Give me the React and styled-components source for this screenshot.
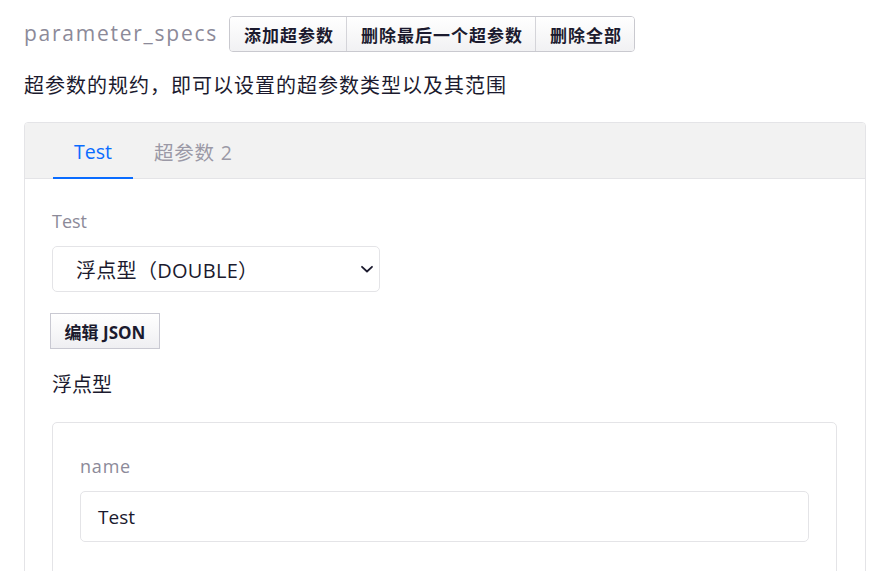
import styled, { createGlobalStyle } from 'styled-components';

const GlobalStyle = createGlobalStyle`
    body {
        margin: 0;
        background: #fff;
        font-family: "Open Sans", "Noto Sans CJK SC", sans-serif;
        color: #1b1a2e;
    }
`;

const tabs = ['Test', '超参数 2'];

const App = () => {
    return (
        <Page>
            <GlobalStyle />
            <Header>
                <FieldName>parameter_specs</FieldName>
                <ButtonGroup>
                    <GroupButton>添加超参数</GroupButton>
                    <GroupButton>删除最后一个超参数</GroupButton>
                    <GroupButton>删除全部</GroupButton>
                </ButtonGroup>
            </Header>
            <Description>超参数的规约，即可以设置的超参数类型以及其范围</Description>

            <Card>
                <TabBar>
                    {tabs.map((tab, i) => (
                        <Tab key={tab} $active={i === 0}>{tab}</Tab>
                    ))}
                </TabBar>
                <CardBody>
                    <Label>Test</Label>
                    <SelectBox>
                        <span>浮点型（DOUBLE）</span>
                        <svg width="14" height="14" viewBox="0 0 14 14">
                            <path d="M2 4.8l5 4.7 5-4.7" fill="none" stroke="#1b1a2e" strokeWidth="1.8" strokeLinecap="round" strokeLinejoin="round" />
                        </svg>
                    </SelectBox>
                    <JsonButton>编辑 JSON</JsonButton>
                    <TypeTitle>浮点型</TypeTitle>
                    <InnerCard>
                        <Label $inner>name</Label>
                        <TextInput>Test</TextInput>
                    </InnerCard>
                </CardBody>
            </Card>
        </Page>
    );
};

const Page = styled.div`
    padding: 16px 21px 0 24px;
`;

const Header = styled.div`
    display: flex;
    align-items: center;
    gap: 11px;
`;

const FieldName = styled.div`
    font-size: 21px;
    color: #8c8a99;
    letter-spacing: 1.75px;
    margin-top: -3px;
`;

const ButtonGroup = styled.div`
    display: flex;
    border: 1px solid #c9c9cf;
    border-radius: 4px;
    overflow: hidden;
`;

const GroupButton = styled.div`
    height: 34px;
    display: flex;
    align-items: center;
    padding: 0 12px 0 14px;
    font-size: 17px;
    letter-spacing: 1px;
    font-weight: 700;
    color: #1b1a2e;
    background: linear-gradient(#ffffff, #f1f1f3);

    & + & {
        border-left: 1px solid #d4d4d9;
    }
`;

const Description = styled.div`
    margin-top: 21px;
    font-size: 20px;
    letter-spacing: 1px;
    line-height: 26px;
    color: #1b1a2e;
`;

const Card = styled.div`
    margin-top: 23px;
    border: 1px solid #e4e4e7;
    border-radius: 4px;
    overflow: hidden;
    height: 460px;
`;

const TabBar = styled.div`
    display: flex;
    background: #f2f2f2;
    border-bottom: 1px solid #e4e4e7;
    padding-left: 28px;
    height: 55px;
`;

const Tab = styled.div`
    display: flex;
    align-items: center;
    padding: 2px 21px 0;
    font-size: 19.5px;
    letter-spacing: ${p => (p.$active ? '0' : '0.8px')};
    color: ${p => (p.$active ? '#0a6cff' : '#9b99a6')};
    border-bottom: 2px solid ${p => (p.$active ? '#0a6cff' : 'transparent')};
    margin-bottom: -1px;
`;

const CardBody = styled.div`
    padding: 30px 28px 0 27px;
`;

const Label = styled.div`
    font-size: 18px;
    letter-spacing: ${p => (p.$inner ? '0.8px' : '0')};
    color: #8c8a99;
    line-height: 24px;
`;

const SelectBox = styled.div`
    margin-top: 13px;
    width: 328px;
    height: 46px;
    box-sizing: border-box;
    border: 1px solid #e4e4e7;
    border-radius: 5px;
    display: flex;
    align-items: center;
    justify-content: space-between;
    padding: 0 5px 0 23px;
    font-size: 20px;
    letter-spacing: 0.3px;
    color: #1b1a2e;
`;

const JsonButton = styled.div`
    margin: 21px 0 0 -2px;
    width: 110px;
    height: 36px;
    box-sizing: border-box;
    border: 1px solid #c9c9d2;
    background: linear-gradient(#ffffff, #efeff2);
    display: flex;
    align-items: center;
    justify-content: center;
    font-size: 17px;
    font-weight: 700;
    color: #1b1a2e;
`;

const TypeTitle = styled.div`
    margin-top: 23px;
    font-size: 20px;
    line-height: 26px;
    color: #1b1a2e;
`;

const InnerCard = styled.div`
    margin-top: 24px;
    border: 1px solid #e4e4e7;
    border-radius: 5px;
    padding: 31px 27px 40px 27px;
    height: 200px;
`;

const TextInput = styled.div`
    margin-top: 13px;
    height: 51px;
    box-sizing: border-box;
    border: 1px solid #e4e4e7;
    border-radius: 5px;
    display: flex;
    align-items: center;
    padding: 0 17px;
    font-size: 19px;
    color: #1b1a2e;
`;

export default App;
